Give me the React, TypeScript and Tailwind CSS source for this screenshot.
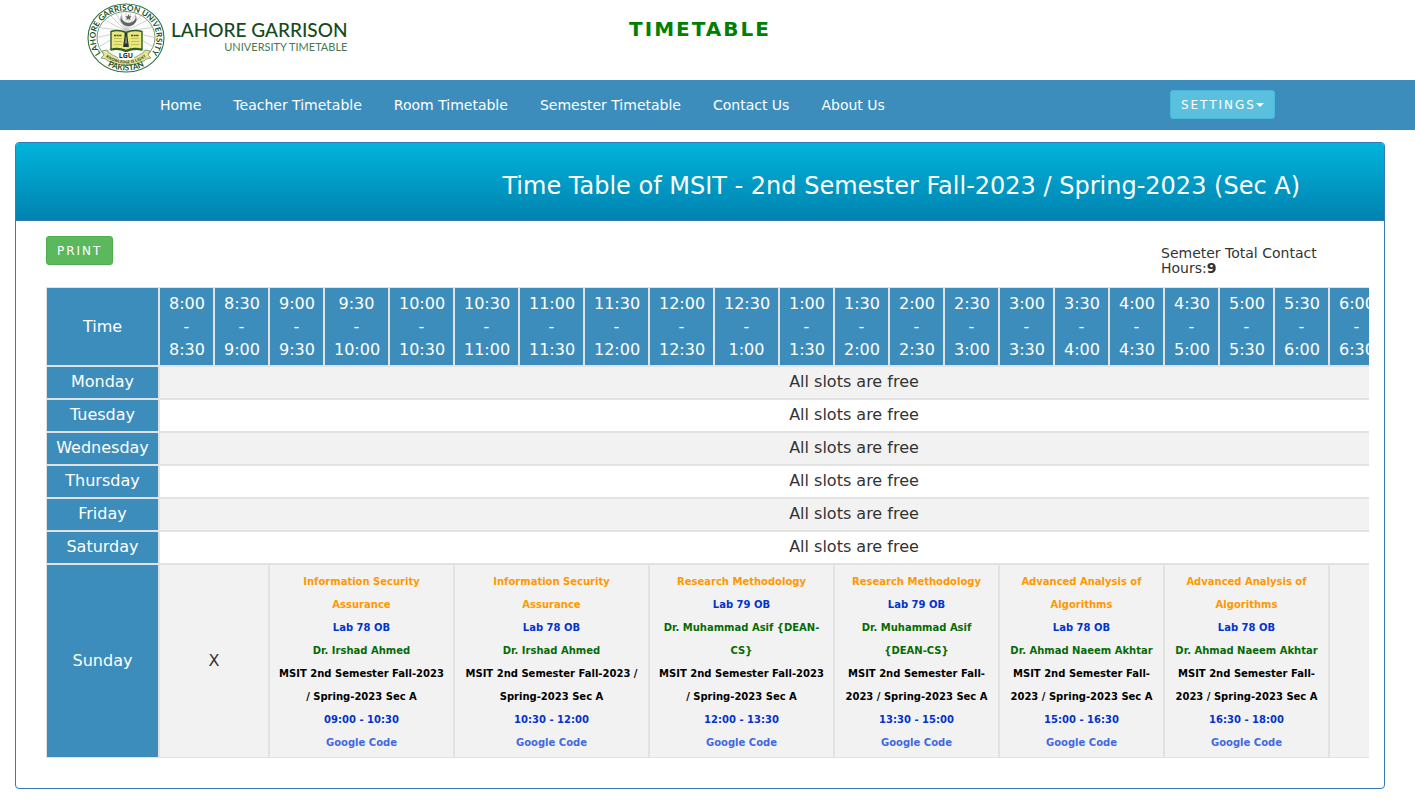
import React from "react";

const NAV_LINKS = [
  "Home",
  "Teacher Timetable",
  "Room Timetable",
  "Semester Timetable",
  "Contact Us",
  "About Us",
];

const TIMES = [
  "8:00", "8:30", "9:00", "9:30", "10:00", "10:30", "11:00", "11:30", "12:00",
  "12:30", "1:00", "1:30", "2:00", "2:30", "3:00", "3:30", "4:00", "4:30",
  "5:00", "5:30", "6:00", "6:30", "7:00", "7:30", "8:00",
];

const SLOTS = TIMES.slice(0, -1).map((start, i) => ({ start, end: TIMES[i + 1] }));

const FREE_DAYS = ["Monday", "Tuesday", "Wednesday", "Thursday", "Friday", "Saturday"];

const CLASSES = [
  { subject: "Information Security Assurance", room: "Lab 78 OB", teacher: "Dr. Irshad Ahmed", time: "09:00 - 10:30" },
  { subject: "Information Security Assurance", room: "Lab 78 OB", teacher: "Dr. Irshad Ahmed", time: "10:30 - 12:00" },
  { subject: "Research Methodology", room: "Lab 79 OB", teacher: "Dr. Muhammad Asif {DEAN-CS}", time: "12:00 - 13:30" },
  { subject: "Research Methodology", room: "Lab 79 OB", teacher: "Dr. Muhammad Asif {DEAN-CS}", time: "13:30 - 15:00" },
  { subject: "Advanced Analysis of Algorithms", room: "Lab 78 OB", teacher: "Dr. Ahmad Naeem Akhtar", time: "15:00 - 16:30" },
  { subject: "Advanced Analysis of Algorithms", room: "Lab 78 OB", teacher: "Dr. Ahmad Naeem Akhtar", time: "16:30 - 18:00" },
];

const TIME_CELL = "border border-[#e2e2e2] bg-[#3c8dbc] px-[9px] py-1 font-normal text-white";
const DAY_CELL = "border border-[#e2e2e2] bg-[#3c8dbc] px-[9px] pt-[3px] pb-[5px] font-normal text-white";
const BODY_CELL = "border border-[#e2e2e2] px-[9px] pt-[3px] pb-[5px]";
const CLASS_CELL = "border border-[#e2e2e2] px-[9px] pt-[5px] pb-[3px] text-[10px] leading-[23px] font-bold";

function Emblem() {
  return (
    <svg viewBox="0 0 78 70" className="h-[70px] w-[78px] shrink-0" role="img" aria-label="Lahore Garrison University emblem">
      <defs>
        <path id="ring-top" d="M15 52 A30.5 27.5 0 1 1 63 52" />
        <path id="ring-bottom" d="M14 58.1 A35.5 32.5 0 0 0 64 58.1" />
        <path id="ribbon-line" d="M18 53.5 Q39 67.5 60 53.5" />
        <clipPath id="inner-disc">
          <ellipse cx="39" cy="34.5" rx="28.5" ry="25.5" />
        </clipPath>
      </defs>
      <ellipse cx="39" cy="35" rx="38" ry="34" fill="#fff" stroke="#2f7040" strokeWidth="1.1" />
      <ellipse cx="39" cy="34.5" rx="29" ry="26" fill="#fdfdfd" stroke="#4a7d54" strokeWidth=".8" />
      <g clipPath="url(#inner-disc)" stroke="#c4c7c4" strokeWidth=".8">
        <path d="M39 28 8 24M39 28 8 12M39 28 14 3M39 28 24 2M39 28 32 2M39 28 39 2M39 28 46 2M39 28 54 2M39 28 64 3M39 28 70 12M39 28 70 24M39 28 8 35M39 28 70 35M39 28 8 46M39 28 70 46M39 28 14 56M39 28 64 56" />
      </g>
      <path d="M34.500 12 A8.200 7.400 0 1 0 48.500 12 A7.200 6.400 0 1 1 34.500 12Z" fill="#5f6562" />
      <path d="m41.500 11 1 2.200 2.300.2-1.800 1.500.6 2.300-2.100-1.200-2.100 1.200.6-2.300-1.800-1.500 2.300-.2z" fill="#5f6562" />
      <path d="M24 28.500Q31.500 26 39 29.500Q46.500 26 55 28.500V46.500Q47 44 39 47.500Q31 44 24 46.500Z" fill="#e9e87c" stroke="#2e5c23" strokeWidth="1.4" />
      <path d="M24 47Q31 45 39 48.500Q47 45 55 47" fill="none" stroke="#335d1d" strokeWidth="1.5" />
      <path d="M27 32.500h8M44 32.500h8" stroke="#44483a" strokeWidth="1.3" strokeDasharray="2 .6" />
      <path d="M27 35.500h8M27 38.500h8M27 41.500h8M44 35.500h8M44 38.500h8M44 41.500h8" stroke="#bfb957" strokeWidth=".9" />
      <path d="M37.600 30h2.800v2.500l1.500 11.500h-5.800l1.500-11.500z" fill="#27332c" />
      <path d="M38.600 33.500h.9l.7 7h-2.200z" fill="#829181" />
      <path d="M15 48 20 47 22 50Q39 62 56 50L58 47 63 48 61 52 64 55 59 56 58 57.500Q39 67 20 57.500L19 56 14 55 17 52Z" fill="#e5e695" stroke="#6c8550" strokeWidth=".7" />
      <path d="M31 49.500h16v6.500q-8 2.500-16 0z" fill="#fdfdfd" />
      <text x="39" y="55" textAnchor="middle" fill="#123d22" className="font-['Open_Sans',sans-serif] text-[7px] font-bold">LGU</text>
      <text fill="#35462b" className="font-['Open_Sans',sans-serif] text-[4px] font-bold">
        <textPath href="#ribbon-line" startOffset="50%" textAnchor="middle">KNOWLEDGE IS LIGHT</textPath>
      </text>
      <text fill="#17502a" className="font-['Lato',sans-serif] text-[8px] font-bold">
        <textPath href="#ring-top" startOffset="50%" textAnchor="middle">LAHORE GARRISON UNIVERSITY</textPath>
      </text>
      <text fill="#17502a" className="font-['Lato',sans-serif] text-[8px] font-bold">
        <textPath href="#ring-bottom" startOffset="50%" textAnchor="middle">PAKISTAN</textPath>
      </text>
    </svg>
  );
}

function SiteHeader() {
  return (
    <header className="grid h-20 grid-cols-[1fr_auto_1fr] items-start pr-[15px]">
      <a href="#" className="ml-[87px] flex items-start gap-1.5 pt-[3px]">
        <Emblem />
        <span className="flex flex-col items-end pt-4 font-['Lato',sans-serif]">
          <span className="text-[19px] leading-[22px] font-medium text-[#144a20]">LAHORE GARRISON</span>
          <span className="text-[11px] leading-3 text-[#477a54]">UNIVERSITY TIMETABLE</span>
        </span>
      </a>
      <h1 className="pt-[18px] text-xl leading-[22px] font-bold tracking-[2px] text-[green]">TIMETABLE</h1>
    </header>
  );
}

function NavBar() {
  return (
    <nav className="bg-[#3c8dbc] pr-[15px]">
      <div className="mx-auto flex h-[50px] max-w-[1170px] items-center justify-between pr-[10px] pl-[30px]">
        <ul className="flex gap-0.5">
          {NAV_LINKS.map((label) => (
            <li key={label}>
              <a href="#" className="block px-[15px] text-sm leading-5 text-white">{label}</a>
            </li>
          ))}
        </ul>
        <button type="button" className="mb-px flex h-[29px] items-center rounded-[3px] border border-[#46b8da] bg-[#5bc0de] px-[10px] text-xs tracking-[2px] text-white">
          SETTINGS
          <svg viewBox="0 0 8 4" className="h-1 w-2" aria-hidden="true">
            <path d="M0 0h8L4 4z" fill="currentColor" />
          </svg>
        </button>
      </div>
    </nav>
  );
}

function ClassCell({ item, span }: { item: (typeof CLASSES)[number]; span: number }) {
  return (
    <td colSpan={span} className={CLASS_CELL}>
      <div className="text-[#ff9800]">{item.subject}</div>
      <div className="text-[#0433cc]">{item.room}</div>
      <div className="text-[#066b06]">{item.teacher}</div>
      <div className="text-black">MSIT 2nd Semester Fall-2023 / Spring-2023 Sec A</div>
      <div className="text-[#0433cc]">{item.time}</div>
      <a href="#" className="block text-[#4169e1]">Google Code</a>
    </td>
  );
}

function Timetable() {
  return (
    <div className="overflow-x-auto [scrollbar-width:none]">
      <table className="w-[1503px] table-fixed border-separate border-spacing-0 text-center text-base leading-[23px] text-[#333]">
        <colgroup>
          <col className="w-[113px]" />
          {SLOTS.map((slot, i) => (
            <col key={i} className={slot.start.length + slot.end.length > 8 ? "w-[65px]" : "w-[55px]"} />
          ))}
        </colgroup>
        <thead>
          <tr>
            <th scope="col" className={TIME_CELL}>Time</th>
            {SLOTS.map((slot, i) => (
              <th key={i} scope="col" className={TIME_CELL}>
                {slot.start}<br />-<br />{slot.end}
              </th>
            ))}
          </tr>
        </thead>
        <tbody>
          {FREE_DAYS.map((day) => (
            <tr key={day} className="odd:bg-[#f2f2f2]">
              <th scope="row" className={DAY_CELL}>{day}</th>
              <td colSpan={24} className={BODY_CELL}>All slots are free</td>
            </tr>
          ))}
          <tr className="bg-[#f2f2f2]">
            <th scope="row" className={DAY_CELL}>Sunday</th>
            <td colSpan={2} className={BODY_CELL}>X</td>
            {CLASSES.map((item) => (
              <ClassCell key={item.time} item={item} span={3} />
            ))}
            <td colSpan={4} className={BODY_CELL}>X</td>
          </tr>
        </tbody>
      </table>
    </div>
  );
}

export default function App() {
  return (
    <div className="bg-white pb-5 font-['DejaVu_Sans',sans-serif] text-[#333]">
      <SiteHeader />
      <NavBar />
      <main className="mt-3 mr-[30px] ml-[15px] rounded border border-[#337ab7]">
        <div className="rounded-t-[3px] border-b border-[#337ab7] bg-linear-to-b from-[#00b4db] to-[#0083b0] pt-[30px] pr-[84px] pb-[21px]">
          <h2 className="text-right text-2xl leading-[26px] text-white">
            Time Table of MSIT - 2nd Semester Fall-2023 / Spring-2023 (Sec A)
          </h2>
        </div>
        <div className="pt-[15px] pr-[15px] pb-[30px] pl-[30px]">
          <div className="flex h-[51px] items-start justify-between">
            <button type="button" className="h-[29px] rounded-[3px] border border-[#4cae4c] bg-[#5cb85c] px-[10px] text-xs tracking-[2px] text-white">
              PRINT
            </button>
            <p className="mt-[10px] w-[208px] pr-10 text-sm leading-[15px]">
              Semeter Total Contact Hours:<b>9</b>
            </p>
          </div>
          <Timetable />
        </div>
      </main>
    </div>
  );
}
